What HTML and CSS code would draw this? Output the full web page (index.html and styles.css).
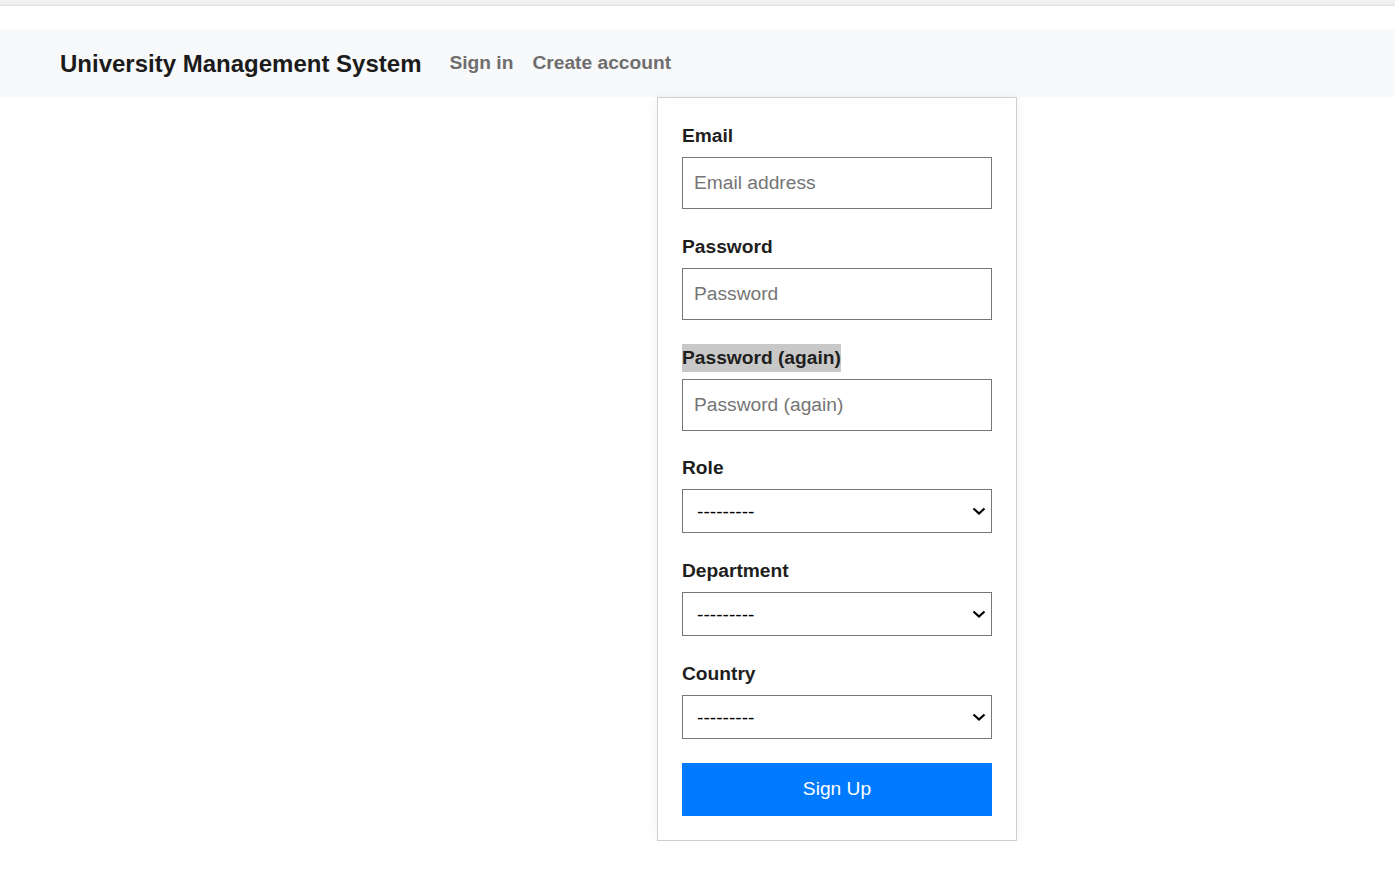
FILE: index.html
```html
<!DOCTYPE html>
<html lang="en">
<head>
<meta charset="utf-8">
<title>University Management System</title>
<link rel="stylesheet" href="styles.css">
</head>
<body>
<div class="topstrip"></div>
<nav class="navbar">
  <a class="brand" href="#">University Management System</a>
  <div class="navlinks">
    <a class="navlink" href="#">Sign in</a>
    <a class="navlink" href="#">Create account</a>
  </div>
</nav>
<main class="main">
  <form class="card">
    <div class="group">
      <label class="label">Email</label>
      <input class="field" type="email" placeholder="Email address">
    </div>
    <div class="group">
      <label class="label">Password</label>
      <input class="field" type="password" placeholder="Password">
    </div>
    <div class="group group-tight">
      <label class="label"><span class="selected">Password (again)</span></label>
      <input class="field" type="password" placeholder="Password (again)">
    </div>
    <div class="group">
      <label class="label">Role</label>
      <div class="select-wrap">
        <select class="select"><option>---------</option></select>
        <svg class="chevron" width="14" height="8" viewBox="0 0 14 8"><path d="M1.5 1.5 L7 6.5 L12.5 1.5" fill="none" stroke="#000" stroke-width="2.2"/></svg>
      </div>
    </div>
    <div class="group">
      <label class="label">Department</label>
      <div class="select-wrap">
        <select class="select"><option>---------</option></select>
        <svg class="chevron" width="14" height="8" viewBox="0 0 14 8"><path d="M1.5 1.5 L7 6.5 L12.5 1.5" fill="none" stroke="#000" stroke-width="2.2"/></svg>
      </div>
    </div>
    <div class="group">
      <label class="label">Country</label>
      <div class="select-wrap">
        <select class="select"><option>---------</option></select>
        <svg class="chevron" width="14" height="8" viewBox="0 0 14 8"><path d="M1.5 1.5 L7 6.5 L12.5 1.5" fill="none" stroke="#000" stroke-width="2.2"/></svg>
      </div>
    </div>
    <button class="submit" type="button">Sign Up</button>
  </form>
</main>
</body>
</html>
```
FILE: styles.css
```css
* { box-sizing: border-box; }
html, body { margin: 0; padding: 0; background: #fff; }
body {
  font-family: "Liberation Sans", Arial, sans-serif;
  color: #212529;
}
.topstrip {
  height: 6px;
  background: linear-gradient(#f3f3f3, #ededed);
  border-bottom: 1px solid #e2e2e2;
}
.navbar {
  margin-top: 24px;
  height: 67px;
  background: #f8f9fa;
  display: flex;
  align-items: center;
  padding-left: 60px;
}
.brand {
  font-size: 24px;
  font-weight: 700;
  color: #1b1b1b;
  text-decoration: none;
}
.navlinks {
  display: flex;
  gap: 19px;
  margin-left: 28px;
  margin-bottom: 2px;
}
.navlink {
  font-size: 19.2px;
  font-weight: 700;
  color: #6e6e6e;
  text-decoration: none;
}
.main {
  display: flex;
  padding-left: 657px;
}
.card {
  width: 360px;
  border: 1px solid #cfcfcf;
  background: #fff;
  padding: 24px;
  box-shadow: 0 0 12px rgba(0, 0, 0, 0.06);
  display: flex;
  flex-direction: column;
}
.group {
  display: flex;
  flex-direction: column;
  margin-bottom: 24px;
}
.group-tight { margin-bottom: 23px; }
.label {
  display: block;
  height: 28px;
  line-height: 28px;
  font-size: 19.2px;
  font-weight: 700;
  color: #1e1e1e;
  margin-bottom: 7px;
}
.selected {
  display: inline-block;
  background: #c8c8c8;
  line-height: 28px;
}
.field {
  width: 310px;
  height: 52px;
  border: 1px solid #767676;
  border-radius: 0;
  padding: 0 11px 1px;
  font-family: "Liberation Sans", Arial, sans-serif;
  font-size: 19.2px;
  color: #212529;
  background: #fff;
  outline: none;
}
.field::placeholder { color: #757575; }
.select-wrap {
  position: relative;
  width: 310px;
  height: 44px;
}
.select {
  -webkit-appearance: none;
  appearance: none;
  width: 310px;
  height: 44px;
  border: 1px solid #767676;
  border-radius: 0;
  padding: 0 40px 0 14px;
  font-family: "Liberation Sans", Arial, sans-serif;
  font-size: 19.2px;
  color: #000;
  background: #fff;
}
.chevron {
  position: absolute;
  right: 6px;
  top: 18px;
  pointer-events: none;
}
.submit {
  width: 310px;
  height: 53px;
  border: none;
  background: #007bff;
  color: #fff;
  font-family: "Liberation Sans", Arial, sans-serif;
  font-size: 19.2px;
  padding-bottom: 2px;
  cursor: pointer;
}
```
